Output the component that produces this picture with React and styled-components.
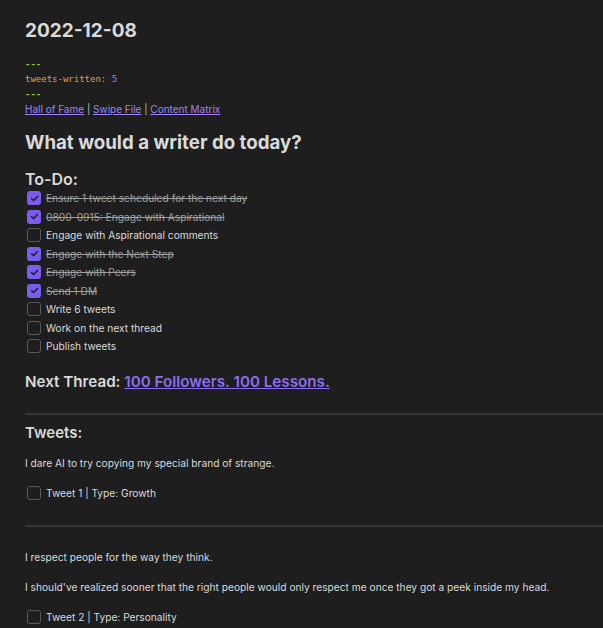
import React from "react";
import styled, { createGlobalStyle } from "styled-components";

const GlobalStyle = createGlobalStyle`
  html, body {
    margin: 0;
    padding: 0;
    background: #1e1e1e;
  }
  body {
    font-family: Inter, "Noto Sans", sans-serif;
    color: #dadada;
    overflow: hidden;
  }
`;

const Page = styled.div`
  width: 603px;
  height: 628px;
  overflow: hidden;
  padding: 19px 0 0 25px;
  box-sizing: border-box;
`;

const Title = styled.h1`
  margin: 0 0 14px;
  font-size: 19px;
  font-weight: 700;
  line-height: 24px;
  color: #dadada;
`;

const Frontmatter = styled.div`
  font-family: "DejaVu Sans Mono", "Liberation Mono", monospace;
  font-size: 9px;
  line-height: 15px;
`;

const Dashes = styled.div`
  color: #8cc34b;
  font-weight: 700;
`;

const Key = styled.span`
  color: #ef9a45;
`;

const Colon = styled.span`
  color: #bdbdbd;
`;

const Num = styled.span`
  color: #a782e8;
`;

const LinkRow = styled.div`
  font-size: 10px;
  line-height: 15px;
  color: #bdbdbd;
`;

const A = styled.a`
  color: ${(p) => (p.$big ? "#8d6cf0" : "#9f84f2")};
  text-decoration: underline;
  text-underline-offset: 1px;
  cursor: pointer;
`;

const H2 = styled.h2`
  margin: 14px 0 0;
  font-size: 18.7px;
  font-weight: 700;
  line-height: 24px;
`;

const H3 = styled.h3`
  margin: ${(p) => p.$m || "14px 0 0"};
  font-size: ${(p) => p.$size || "16px"};
  font-weight: 600;
  line-height: 20px;
`;

const List = styled.ul`
  list-style: none;
  margin: ${(p) => p.$m || "0"};
  padding: 0 0 0 2px;
`;

const Item = styled.li`
  display: flex;
  align-items: center;
  gap: 5px;
  height: 18.5px;
  font-size: 10.2px;
  color: ${(p) => (p.$done ? "#a0a0a0" : "#dadada")};
  text-decoration: ${(p) => (p.$done ? "line-through" : "none")};
`;

const Box = styled.span`
  flex: none;
  width: 14px;
  height: 14px;
  box-sizing: border-box;
  border-radius: 3px;
  border: ${(p) => (p.$checked ? "none" : "1px solid #5a5a5a")};
  background: ${(p) => (p.$checked ? "#7b5cf0" : "transparent")};
  display: flex;
  align-items: center;
  justify-content: center;
`;

const Rule = styled.hr`
  border: none;
  height: 2px;
  background: #363636;
  margin: ${(p) => p.$m || "0"};
  width: 600px;
`;

const Para = styled.p`
  margin: ${(p) => p.$m || "0"};
  font-size: 10.2px;
  line-height: 14px;
  color: #dadada;
`;

const Check = () => (
  <svg width="9" height="9" viewBox="0 0 10 10">
    <path d="M1.8 5.2 L4 7.3 L8.3 2.8" fill="none" stroke="#1e1e1e" strokeWidth="1.7" strokeLinecap="round" strokeLinejoin="round" />
  </svg>
);

const Task = ({ done, children }) => (
  <Item $done={done}>
    <Box $checked={done}>{done && <Check />}</Box>
    <span>{children}</span>
  </Item>
);

const todos = [
  ["Ensure 1 tweet scheduled for the next day", true],
  ["0800–0915: Engage with Aspirational", true],
  ["Engage with Aspirational comments", false],
  ["Engage with the Next Step", true],
  ["Engage with Peers", true],
  ["Send 1 DM", true],
  ["Write 6 tweets", false],
  ["Work on the next thread", false],
  ["Publish tweets", false],
];

export default function App() {
  return (
    <>
      <GlobalStyle />
      <Page>
        <Title>2022-12-08</Title>
        <Frontmatter>
          <Dashes>---</Dashes>
          <div>
            <Key>tweets-written</Key>
            <Colon>: </Colon>
            <Num>5</Num>
          </div>
          <Dashes>---</Dashes>
        </Frontmatter>
        <LinkRow>
          <A>Hall of Fame</A> | <A>Swipe File</A> | <A>Content Matrix</A>
        </LinkRow>
        <H2>What would a writer do today?</H2>
        <H3>To-Do:</H3>
        <List>
          {todos.map(([t, d]) => (
            <Task key={t} done={d}>
              {t}
            </Task>
          ))}
        </List>
        <H3 $size="15.2px" $m="16px 0 0">
          Next Thread: <A $big>100 Followers. 100 Lessons.</A>
        </H3>
        <Rule $m="21px 0 0" />
        <H3 $size="15px" $m="8px 0 0">Tweets:</H3>
        <Para $m="13px 0 0">I dare AI to try copying my special brand of strange.</Para>
        <List $m="14px 0 0">
          <Task>Tweet 1 | Type: Growth</Task>
        </List>
        <Rule $m="23px 0 0" />
        <Para $m="23px 0 0">I respect people for the way they think.</Para>
        <Para $m="16px 0 0">
          I should've realized sooner that the right people would only respect me once they got a peek inside my head.
        </Para>
        <List $m="14px 0 0">
          <Task>Tweet 2 | Type: Personality</Task>
        </List>
      </Page>
    </>
  );
}
